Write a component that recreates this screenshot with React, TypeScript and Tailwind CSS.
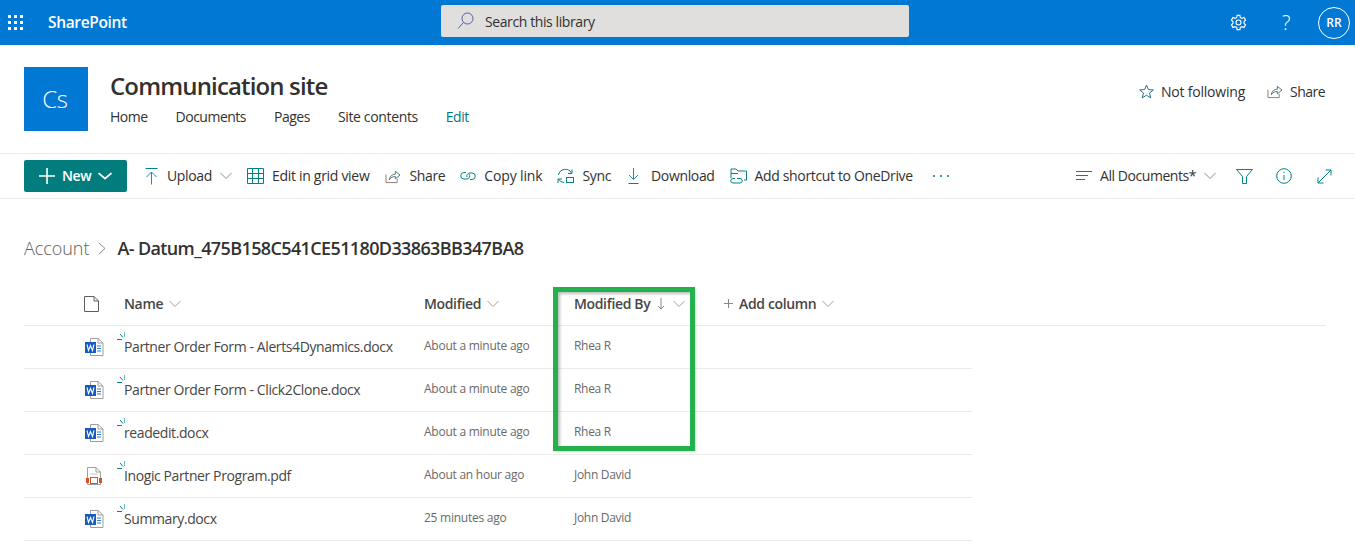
import React from "react";

const teal = "#038387";
const S = ({ w = 18, h = 18, vb = "0 0 18 18", c = teal, children, className = "" }: any) => (
  <svg width={w} height={h} viewBox={vb} fill="none" stroke={c} strokeWidth={1} className={"shrink-0 " + className}>
    {children}
  </svg>
);
const Chevron = ({ c = "#8a8886", w = 12, sw = 1 }: any) => (
  <svg width={w} height={8} viewBox="0 0 12 8" preserveAspectRatio="none" fill="none" stroke={c} strokeWidth={sw} className="shrink-0">
    <path d="M0.5 1 L6 6.5 L11.5 1" />
  </svg>
);
const ShareIcon = () => (
  <S w={16} h={15} vb="0 0 17 16" c="#4a6f7c">
    <path d="M1 6 V14.5 H13 V10.5" stroke="#8a7a6a" />
    <path d="M4.5 11.5 C5 7.5 8 5.5 11 5.5 V2.5 L16 6.5 L11 10.5 V8 C8.5 8 6 9 4.5 11.5 Z" />
  </S>
);
const WordIcon = () => (
  <svg width={19} height={18} viewBox="0 0 19 18" className="shrink-0">
    <path d="M5.5 0.5 H13 L18 5 V17.5 H5.5 Z" fill="#fff" stroke="#a19f9d" />
    <path d="M13 0.5 V5 H18" fill="none" stroke="#a19f9d" />
    <path d="M12 8 H16 M12 10.5 H16 M12 13 H16" stroke="#2b7cd3" strokeWidth={1} />
    <rect x="0" y="4" width="11" height="11" fill="#185abd" />
    <path d="M2 6.5 L3.5 12.5 L5.5 7.5 L7.5 12.5 L9 6.5" fill="none" stroke="#fff" strokeWidth={1.1} />
  </svg>
);
const PdfIcon = () => (
  <svg width={16} height={18} viewBox="0 0 16 18" className="shrink-0">
    <path d="M1.5 0.5 H10 L14.5 5 V17.5 H1.5 Z" fill="#fff" stroke="#a19f9d" />
    <path d="M10 0.5 V5 H14.5" fill="none" stroke="#a19f9d" />
    <path d="M4 7 H12" stroke="#c8c6c4" />
    <rect x="0" y="11" width="3" height="5" fill="#d4532b" />
    <rect x="13" y="11" width="3" height="5" fill="#d4532b" />
    <rect x="4.5" y="10.5" width="7" height="6" fill="#fff" stroke="#d4532b" strokeWidth={1} />
  </svg>
);
const Spark = () => (
  <svg width={9} height={9} viewBox="0 0 9 9" className="absolute left-[-7px] top-[-5px]" fill="none" strokeWidth={1}>
    <path d="M0 7.5 H5" stroke={teal} />
    <path d="M3 2 L6 5.5" stroke={teal} />
    <path d="M7.5 0 V5" stroke="#6fbcbc" />
  </svg>
);

const Cmd = ({ icon, label, chevron, className = "", gap = "ml-[8px]" }: any) => (
  <div className={"flex items-center " + className}>
    {icon}
    <span className={gap + " mb-[2px] text-[#323130]"}>{label}</span>
    {chevron && <span className="ml-[8px]"><Chevron /></span>}
  </div>
);

const rows = [
  { n: "Partner Order Form - Alerts4Dynamics.docx", m: "About a minute ago", b: "Rhea R", pdf: false },
  { n: "Partner Order Form - Click2Clone.docx", m: "About a minute ago", b: "Rhea R", pdf: false },
  { n: "readedit.docx", m: "About a minute ago", b: "Rhea R", pdf: false },
  { n: "Inogic Partner Program.pdf", m: "About an hour ago", b: "John David", pdf: true },
  { n: "Summary.docx", m: "25 minutes ago", b: "John David", pdf: false },
];

export default function App() {
  return (
    <div className="relative h-[551px] w-[1355px] overflow-hidden bg-white text-[14px] tracking-[-0.35px] text-[#323130] font-['Open_Sans','Noto_Sans',sans-serif]">
      {/* Suite bar */}
      <header className="flex h-[45px] items-center bg-[#0078d4] text-white">
        <div className="ml-[8px] grid grid-cols-3 gap-[3px]">
          {Array.from({ length: 9 }).map((_, i) => (
            <span key={i} className="h-[3px] w-[3px] bg-white" />
          ))}
        </div>
        <span className="ml-[25px] w-[393px] text-[15.5px] font-semibold">SharePoint</span>
        <div className="mb-[3px] flex h-[32px] w-[468px] items-center rounded-[2px] bg-[#e1dfdd] pl-[16px] text-[#323130]">
          <svg width={17} height={18} viewBox="0 0 17 18" fill="none" stroke="#4a5fa5" strokeWidth={1}>
            <circle cx="10.5" cy="6.5" r="5.5" />
            <path d="M6.5 10.5 L1 16.5" />
          </svg>
          <span className="ml-[11px] text-[14px] tracking-[-0.4px]">Search this library</span>
        </div>
        <div className="ml-auto flex items-center">
          <svg width={17} height={17} viewBox="0 0 24 24" fill="none" stroke="#fff" strokeWidth={1.6}>
            <circle cx="12" cy="12" r="3.5" />
            <path d="M10 2 H14 L14.6 5 L17 6.2 L19.8 5 L22 8.6 L19.8 10.6 V13.4 L22 15.4 L19.8 19 L17 17.8 L14.6 19 L14 22 H10 L9.4 19 L7 17.8 L4.2 19 L2 15.4 L4.2 13.4 V10.6 L2 8.6 L4.2 5 L7 6.2 L9.4 5 Z" />
          </svg>
          <span className="ml-[35px] text-[20px] font-light leading-none">?</span>
          <div className="ml-[28px] mr-[5px] flex h-[32px] w-[32px] items-center justify-center rounded-full border border-white text-[12px] font-semibold tracking-normal">RR</div>
        </div>
      </header>

      {/* Site header */}
      <section className="flex h-[109px] border-b border-[#edebe9] pl-[24px] pr-[30px] pt-[22px]">
        <div className="flex h-[64px] w-[64px] items-center justify-center bg-[#0078d4] pr-[2px] text-[24px] font-light text-white">Cs</div>
        <div className="ml-[22px]">
          <h1 className="mt-[3px] text-[24px] font-semibold leading-[32px] tracking-[-0.85px]">Communication site</h1>
          <nav className="mt-[4px] flex gap-[28px] tracking-[-0.5px] text-[#323130]">
            <span>Home</span>
            <span>Documents</span>
            <span>Pages</span>
            <span className="tracking-[-0.35px]">Site contents</span>
            <span className="text-[#03787c]">Edit</span>
          </nav>
        </div>
        <div className="ml-auto mt-[12px] flex h-[24px] items-center tracking-[-0.2px]">
          <S w={15} h={15} vb="0 0 15 15" c="#2f6f85">
            <path d="M7.5 1 L9.4 5.6 L14.4 5.9 L10.5 9 L11.8 13.9 L7.5 11.2 L3.2 13.9 L4.5 9 L0.6 5.9 L5.6 5.6 Z" />
          </S>
          <span className="ml-[7px]">Not following</span>
          <span className="ml-[22px]"><ShareIcon /></span>
          <span className="ml-[7px] tracking-[-0.55px]">Share</span>
        </div>
      </section>

      {/* Command bar */}
      <section className="flex h-[45px] items-center border-b border-[#edebe9] pl-[24px] pr-[23px]">
        <div className="flex h-[32px] w-[103px] items-center rounded-[2px] bg-[#037c7d] pl-[15px] font-semibold text-white">
          <svg width={16} height={16} viewBox="0 0 16 16" fill="none" stroke="#fff" strokeWidth={1.6}><path d="M8 0 V16 M0 8 H16" /></svg>
          <span className="ml-[7px] mb-[2px]">New</span>
          <span className="ml-[7px]"><Chevron c="#fff" w={14} sw={1.6} /></span>
        </div>
        <Cmd className="ml-[18px]" chevron gap="ml-[9px]" label="Upload" icon={
          <S w={13} h={17} vb="0 0 13 17"><path d="M0.5 0.5 H12.5" /><path d="M6.5 16.5 V4 M1.5 9 L6.5 4 L11.5 9" stroke="#2b88a8" /></S>
        } />
        <Cmd className="ml-[15px] tracking-[-0.3px]" label="Edit in grid view" icon={
          <S w={17} h={16} vb="0 0 17 16"><path d="M0.5 0.5 H16.5 V15.5 H0.5 Z M0.5 5.5 H16.5 M0.5 10.5 H16.5 M5.5 0.5 V15.5 M11.5 0.5 V15.5" /></S>
        } />
        <Cmd className="ml-[16px]" label="Share" icon={<ShareIcon />} />
        <Cmd className="ml-[15px] tracking-[-0.15px]" label="Copy link" icon={
          <S w={16} h={12} vb="0 0 16 12"><path d="M6 2.5 H4 A3.2 3.2 0 0 0 4 9 H7 A3 3 0 0 0 9 4" /><path d="M7 7 A3 3 0 0 1 9.5 3 H12 A3.2 3.2 0 0 1 12 9.5 H10" /></S>
        } />
        <Cmd className="ml-[15px]" label="Sync" icon={
          <S w={17} h={17} vb="0 0 17 17"><path d="M1.5 7 A7 7 0 0 1 14.5 5 M15 1.5 V5.5 H11" /><path d="M7 14.5 A6.5 6.5 0 0 1 1.5 11 M1 15 V11 H5" /><rect x="9.5" y="9.5" width="7" height="5" /></S>
        } />
        <Cmd className="ml-[17px]" gap="ml-[12px]" label="Download" icon={
          <S w={11} h={16} vb="0 0 11 16"><path d="M5.5 0 V11.5 M1 7 L5.5 11.5 L10 7" stroke="#2b88a8" /><path d="M0.5 15.5 H10.5" /></S>
        } />
        <Cmd className="ml-[15px]" label="Add shortcut to OneDrive" icon={
          <S w={17} h={16} vb="0 0 17 16"><path d="M1 10 V1 H6 L8 3 H16.5 V12 H14" /><path d="M1 5.5 H8" /><path d="M5 10.5 H3 A2.2 2.2 0 0 0 3 15 H10 A2.2 2.2 0 0 0 10 10.5 H7" /></S>
        } />
        <div className="ml-[20px] flex gap-[5px]">
          <span className="h-[2px] w-[2px] rounded-full bg-[#03787c]" />
          <span className="h-[2px] w-[2px] rounded-full bg-[#03787c]" />
          <span className="h-[2px] w-[2px] rounded-full bg-[#03787c]" />
        </div>
        <div className="ml-auto flex items-center">
          <S w={16} h={10} vb="0 0 16 10"><path d="M0 0.5 H16 M0 4.5 H12 M0 8.5 H9" /></S>
          <span className="ml-[8px] mb-[2px] tracking-[-0.45px]">All Documents*</span>
          <span className="ml-[8px]"><Chevron /></span>
          <span className="ml-[20px]">
            <S w={17} h={15} vb="0 0 17 15"><path d="M0.5 0.5 H16.5 L10.5 7.5 V14.5 H6.5 V7.5 Z" /></S>
          </span>
          <span className="ml-[23px]">
            <S w={16} h={16} vb="0 0 16 16"><circle cx="8" cy="8" r="7.3" /><path d="M8 7 V12" /><path d="M8 4 V5.2" /></S>
          </span>
          <span className="ml-[25px]">
            <S w={15} h={15} vb="0 0 15 15"><path d="M1 14 L14 1 M8.5 1 H14 V6.5 M1 8.5 V14 H6.5" /></S>
          </span>
        </div>
      </section>

      {/* Breadcrumb */}
      <div className="mt-[37px] flex h-[24px] items-center pl-[24px] text-[18px] leading-[24px]">
        <span className="font-light tracking-[-0.05px] text-[#605e5c]">Account</span>
        <svg width={8} height={13} viewBox="0 0 8 13" fill="none" stroke="#8a8886" className="ml-[9px]"><path d="M1 1 L7 6.5 L1 12" /></svg>
        <span className="ml-[11px] font-semibold tracking-[-0.62px]">A- Datum_475B158C541CE51180D33863BB347BA8</span>
      </div>

      {/* List */}
      <div className="mt-[23px] ml-[24px] w-[1302px]">
        <div className="flex h-[43px] items-center border-b border-[#edebe9] pb-[1px] font-semibold text-[#484644]">
          <div className="flex w-[100px] justify-end pr-[25px]">
            <svg width={15} height={16} viewBox="0 0 15 16" fill="none" stroke="#605e5c"><path d="M0.5 0.5 H10 L14.5 5 V15.5 H0.5 Z M10 0.5 V5 H14.5" /></svg>
          </div>
          <div className="flex w-[300px] items-center gap-[6px]">Name <Chevron c="#a19f9d" /></div>
          <div className="flex w-[150px] items-center gap-[6px]">Modified <Chevron c="#a19f9d" /></div>
          <div className="flex w-[150px] items-center">
            Modified By
            <svg width={8} height={12} viewBox="0 0 8 12" fill="none" stroke="#8a8886" className="ml-[7px]"><path d="M4 0 V11 M1 8 L4 11 L7 8" /></svg>
            <span className="ml-[8px]"><Chevron c="#a19f9d" /></span>
          </div>
          <div className="flex items-center">
            <svg width={9} height={9} viewBox="0 0 9 9" stroke="#8a8886"><path d="M4.5 0 V9 M0 4.5 H9" /></svg>
            <span className="ml-[6px]">Add column</span>
            <span className="ml-[6px]"><Chevron c="#a19f9d" /></span>
          </div>
        </div>
        {rows.map((r) => (
          <div key={r.n} className="flex h-[43px] w-[948px] items-center border-b border-[#edebe9] text-[#605e5c]">
            <div className={"flex w-[100px] justify-end " + (r.pdf ? "pr-[22px]" : "pr-[20px]")}>{r.pdf ? <PdfIcon /> : <WordIcon />}</div>
            <div className="w-[300px] pb-[2px]">
              <span className="relative text-[14px] tracking-[-0.4px] text-[#484644]"><Spark />{r.n}</span>
            </div>
            <div className="w-[150px] pb-[2px] text-[12px] tracking-[-0.25px] text-[#6b6967]">{r.m}</div>
            <div className="pb-[2px] text-[12px] tracking-[-0.3px] text-[#6b6967]">{r.b}</div>
          </div>
        ))}
      </div>

      {/* Annotation */}
      <div className="pointer-events-none absolute left-[553px] top-[287px] h-[164px] w-[142px] border-[5px] border-[#22b14c] shadow-[inset_2px_2px_3px_rgba(0,0,0,0.25),1px_1px_2px_rgba(0,0,0,0.15)]" />
    </div>
  );
}
